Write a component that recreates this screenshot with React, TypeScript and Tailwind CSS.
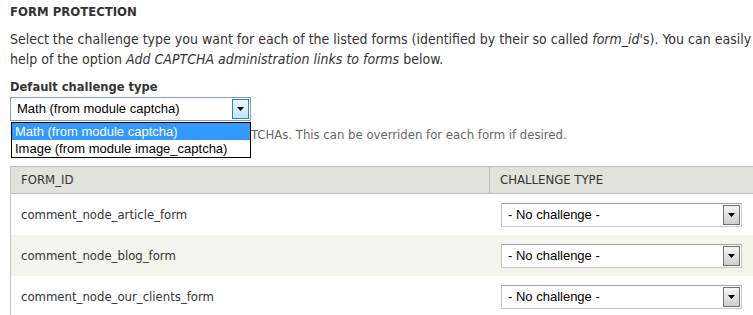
import React from "react";

function Arrow() {
  return (
    <svg width="7" height="4" viewBox="0 0 7 4" className="block">
      <polygon points="0,0 7,0 3.5,4" fill="#000" />
    </svg>
  );
}

function RowSelect() {
  return (
    <div className="flex h-[24px] w-[241px] border border-[#c9c9c9] border-t-[#a3a3a3] bg-white p-[1px] pl-0">
      <div className="flex flex-1 items-center pl-[6px] font-['Liberation_Sans',Arial,sans-serif] text-[13px] text-black">
        - No challenge -
      </div>
      <div className="flex w-[17px] items-center justify-center border border-[#707070] bg-gradient-to-b from-[#f4f4f4] to-[#cfcfcf]">
        <Arrow />
      </div>
    </div>
  );
}

const rows = [
  { id: "comment_node_article_form", even: false },
  { id: "comment_node_blog_form", even: true },
  { id: "comment_node_our_clients_form", even: false },
];

export default function App() {
  return (
    <div className="h-[315px] w-[753px] overflow-hidden bg-white font-['DejaVu_Sans_Condensed','DejaVu_Sans',sans-serif] text-[13px] text-[#333]">
      <div className="pl-[10px] pt-[2px]">
        <h2 className="font-bold uppercase leading-[20px]">Form protection</h2>
        <p className="mt-[7px] whitespace-nowrap text-[14px] leading-[20px]">
          Select the challenge type you want for each of the listed forms (identified by their so called{" "}
          <em>form_id</em>'s). You can easily
          <br />
          help of the option <em>Add CAPTCHA administration links to forms</em> below.
        </p>
        <div className="relative mt-[8px]">
          <label className="block text-[12.8px] font-bold leading-[20px]">Default challenge type</label>
          <div className="flex h-[24px] w-[241px] border border-[#7da2ce] bg-white p-[1px] pl-0">
            <div className="flex flex-1 items-center pl-[6px] font-['Liberation_Sans',Arial,sans-serif] text-[13px] text-black">
              Math (from module captcha)
            </div>
            <div className="flex w-[17px] items-center justify-center border border-[#3c7fb1] bg-gradient-to-b from-[#eaf6fd] to-[#bee6fd]">
              <Arrow />
            </div>
          </div>
          <div className="mt-[5px] whitespace-nowrap text-[13px] leading-[18px] text-[#666]">
            Select the default challenge type for CAPTCHAs. This can be overriden for each form if desired.
          </div>
          <div className="absolute left-[1px] top-[45px] w-[240px] border border-black bg-white font-['Liberation_Sans',Arial,sans-serif] text-[13px] text-black">
            <div className="h-[17px] bg-[#3399ff] pl-[3px] leading-[17px] text-white">Math (from module captcha)</div>
            <div className="h-[17px] pl-[3px] leading-[17px]">Image (from module image_captcha)</div>
          </div>
        </div>
        <div className="mt-[22px] w-[800px] border-l border-[#c8c8c8]">
          <div className="grid h-[28px] grid-cols-[479px_1fr] border-y border-[#bebfb9] bg-[#e1e2dc] uppercase">
            <div className="flex items-center border-r border-[#bebfb9] pl-[10px]">Form_id</div>
            <div className="flex items-center pl-[10px]">Challenge type</div>
          </div>
          {rows.map((r) => (
            <div
              key={r.id}
              className={`grid h-[41px] grid-cols-[480px_1fr] ${r.even ? "bg-[#f3f4ee]" : "bg-white"}`}
            >
              <div className="flex items-center pl-[10px]">{r.id}</div>
              <div className="flex items-center pl-[10px]">
                <RowSelect />
              </div>
            </div>
          ))}
        </div>
      </div>
    </div>
  );
}
